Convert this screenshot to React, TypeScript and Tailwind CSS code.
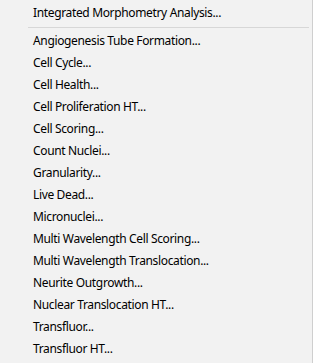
import React from "react";

const items = [
  "Angiogenesis Tube Formation...",
  "Cell Cycle...",
  "Cell Health...",
  "Cell Proliferation HT...",
  "Cell Scoring...",
  "Count Nuclei...",
  "Granularity...",
  "Live Dead...",
  "Micronuclei...",
  "Multi Wavelength Cell Scoring...",
  "Multi Wavelength Translocation...",
  "Neurite Outgrowth...",
  "Nuclear Translocation HT...",
  "Transfluor...",
  "Transfluor HT...",
];

export default function App() {
  return (
    <div
      className="w-[313px] h-[363px] overflow-hidden bg-[#f2f2f2] border-r border-[#cfcfcf] pt-[2px] text-[12px] tracking-[-0.35px] text-black"
      style={{ fontFamily: '"Noto Sans", "Open Sans", sans-serif' }}
    >
      <div className="h-[22px] flex items-center pl-[33px]">Integrated Morphometry Analysis...</div>
      <div className="h-[6px] flex items-center pl-[28px] pr-[3px]">
        <div className="h-px w-full bg-[#d7d7d7]" />
      </div>
      {items.map((t) => (
        <div key={t} className="h-[22px] flex items-center pl-[33px] whitespace-nowrap">
          {t}
        </div>
      ))}
    </div>
  );
}
